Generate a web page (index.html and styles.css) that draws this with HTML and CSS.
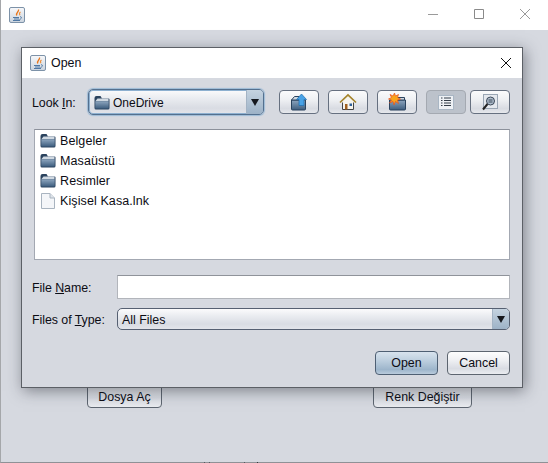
FILE: index.html
```html
<!DOCTYPE html>
<html lang="tr">
<head>
<meta charset="utf-8">
<title>Open</title>
<link rel="stylesheet" href="styles.css">
</head>
<body>
<svg class="defs" width="0" height="0" aria-hidden="true">
  <defs>
    <linearGradient id="fg" x1="0" y1="0" x2="0" y2="1"><stop offset="0" stop-color="#8ea6bf"/><stop offset="1" stop-color="#3d5d7e"/></linearGradient>
    <linearGradient id="jg" x1="0" y1="0" x2="0" y2="1"><stop offset="0" stop-color="#f7f8fa"/><stop offset="1" stop-color="#cbd4de"/></linearGradient>
    <symbol id="java" viewBox="0 0 16 16">
      <rect x=".5" y=".5" width="15" height="15" rx="1.5" fill="url(#jg)" stroke="#7d92a8"/>
      <path d="M9.500 2.500c.8 2.200-2.800 3-1.800 6" stroke="#e8761c" stroke-width="1.300" fill="none"/>
      <path d="M11.500 5c-1.500 1-1.300 2-.6 3.300" stroke="#ee8f3a" stroke-width="1.100" fill="none"/>
      <path d="M4 10.500h6M5 12h5M4 13.500h7" stroke="#4f78a4" fill="none"/>
      <path d="M11 9.800c2-.4 2 2-.5 2.700" stroke="#4f78a4" fill="none"/>
    </symbol>
    <symbol id="folder" viewBox="0 0 16 15">
      <path d="M.5 3V13q0 1.500 1.500 1.500h12q1.500 0 1.500-1.500V4.500q0-1-1-1H8L6.500 1H2.500Q.5 1 .5 3z" fill="#2b435e"/>
      <path d="M1.500 6 3.500 3.500H14.500V6z" fill="#cfd8e1"/>
      <path d="M1.300 6.200h13.400v7.400H1.300z" fill="url(#fg)"/>
    </symbol>
    <symbol id="doc" viewBox="0 0 14 16">
      <path d="M.5.500H9L13.500 5V15.500H.5z" fill="#f4f6f9" stroke="#a9b4c0"/>
      <path d="M9 .5V5H13.500" fill="#dfe4ea" stroke="#a9b4c0"/>
    </symbol>
  </defs>
</svg>

<div class="app">
  <header class="app-title">
    <svg class="ic16"><use href="#java"/></svg>
    <div class="win-controls">
      <svg class="wc" viewBox="0 0 46 30"><path d="M18 14.500H28" stroke="#9a9a9a" fill="none"/></svg>
      <svg class="wc" viewBox="0 0 46 30"><path d="M18.500 9.500h9v9h-9z" stroke="#8a8a8a" fill="none"/></svg>
      <svg class="wc" viewBox="0 0 46 30"><path d="M18 9l10 10M28 9 18 19" stroke="#9a9a9a" fill="none"/></svg>
    </div>
  </header>
  <main class="app-body">
    <button class="btn btn-main btn-dosya">Dosya Aç</button>
    <button class="btn btn-main btn-renk">Renk Değiştir</button>
  </main>
  <div class="clip-marks"></div>
</div>

<section class="dialog">
  <header class="dlg-title">
    <svg class="ic16"><use href="#java"/></svg>
    <span class="dlg-name">Open</span>
    <svg class="dlg-close" viewBox="0 0 12 12"><path d="M1 1l10 10M11 1 1 11" stroke="#111" fill="none"/></svg>
  </header>
  <div class="dlg-body">
    <div class="toolbar">
      <label class="lbl lbl-look">Look <u>I</u>n:</label>
      <div class="combo combo-look">
        <svg class="ic-folder"><use href="#folder"/></svg>
        <span class="combo-text">OneDrive</span>
        <span class="arrow"><i></i></span>
      </div>
      <div class="tools">
        <button class="tbtn">
          <svg width="18" height="18" viewBox="0 0 18 18">
            <path d="M1.500 7V16q0 1 1 1h12q1 0 1-1V7z" fill="url(#fg)" stroke="#2b435e"/>
            <path d="M1.500 7 4.500 3.500H9V7z" fill="#cfd8e1" stroke="#2b435e"/>
            <path d="M11.500 1 16.500 6.500H14v6H9V6.500H6.500z" fill="#48a2e6" stroke="#1e6fb0" stroke-width=".7"/>
          </svg>
        </button>
        <button class="tbtn">
          <svg width="18" height="18" viewBox="0 0 18 18">
            <path d="M3.500 8.500V16.500h11V8.500L9 3z" fill="#f6f4ec"/>
            <path d="M1 9.500 9 2l8 7.500" fill="none" stroke="#a5842a" stroke-width="1.700"/>
            <path d="M3.500 9.500V16.500h11V9.500" fill="none" stroke="#444"/>
            <path d="M6 11h2.500v5.500H6z" fill="#a0601e"/>
            <path d="M10.500 10.500h2.500v2.500h-2.500z" fill="#2f5f98"/>
          </svg>
        </button>
        <button class="tbtn">
          <svg width="18" height="18" viewBox="0 0 18 18">
            <path d="M1.500 7V16q0 1 1 1h14q1 0 1-1V7z" fill="url(#fg)" stroke="#2b435e"/>
            <path d="M9 7 10 4.500h6.500V7z" fill="#cfd8e1" stroke="#2b435e"/>
            <path d="M6.500 0 7.500 3 10.500 1.500 9.500 4.500 12.500 6 9.500 7 10.500 10.500 7.500 8.500 6 12 5 8.500 1.500 10 3.500 7 .5 6 3.500 4.500 2 1.500 5 3z" fill="#f9a41c" stroke="#e8501c" stroke-width=".7"/>
          </svg>
        </button>
        <button class="tbtn tbtn-on">
          <svg width="16" height="15" viewBox="0 0 16 15">
            <rect x=".5" y=".5" width="15" height="14" fill="#eef1f5" stroke="#a9b6c4"/>
            <path d="M3 3h1.500M6 3h7M3 5.500h1.500M6 5.500h7M3 8h1.500M6 8h7M3 10.500h1.500M6 10.500h7" stroke="#333c48" fill="none"/>
          </svg>
        </button>
        <button class="tbtn">
          <svg width="16" height="17" viewBox="0 0 16 17">
            <rect x="1.500" y=".5" width="14" height="14" fill="#e4e8ee" stroke="#9aa6b4"/>
            <circle cx="8.500" cy="7" r="4" fill="#aebccb" stroke="#3b4858"/>
            <path d="M6.500 6h4M6.500 8h4" stroke="#3b4858" fill="none"/>
            <path d="M5.500 10 1 15.500" stroke="#222" stroke-width="2" fill="none"/>
          </svg>
        </button>
      </div>
    </div>

    <ul class="files">
      <li><svg class="ic-folder"><use href="#folder"/></svg>Belgeler</li>
      <li><svg class="ic-folder"><use href="#folder"/></svg>Masaüstü</li>
      <li><svg class="ic-folder"><use href="#folder"/></svg>Resimler</li>
      <li><svg class="ic-doc"><use href="#doc"/></svg>Kişisel Kasa.lnk</li>
    </ul>

    <div class="row row-name">
      <label class="lbl lbl-field">File <u>N</u>ame:</label>
      <input class="name-input" type="text">
    </div>
    <div class="row row-type">
      <label class="lbl lbl-field">Files of <u>T</u>ype:</label>
      <div class="combo combo-type">
        <span class="combo-text">All Files</span>
        <span class="arrow"><i></i></span>
      </div>
    </div>
    <div class="actions">
      <button class="btn btn-dlg btn-open">Open</button>
      <button class="btn btn-dlg">Cancel</button>
    </div>
  </div>
</section>
</body>
</html>
```
FILE: styles.css
```css
* { box-sizing: border-box; }
html, body { margin: 0; padding: 0; }
body {
  position: relative;
  width: 548px;
  height: 463px;
  overflow: hidden;
  background: #d6d9e0;
  font: 12.4px "Liberation Sans", Arial, sans-serif;
  color: #0c0c14;
}
.defs { position: absolute; }
.ic16 { width: 16px; height: 16px; display: block; flex: none; }

/* Parent window */
.app {
  position: relative;
  width: 548px;
  height: 463px;
  display: flex;
  flex-direction: column;
  border-left: 1px solid #a5a7aa;
  border-bottom: 1px solid #8f9196;
}
.app-title {
  height: 30px;
  background: #fff;
  display: flex;
  align-items: center;
  padding: 0 0 0 8px;
  flex: none;
}
.win-controls { margin-left: auto; display: flex; }
.wc { width: 46px; height: 30px; display: block; }
.app-body {
  flex: 1;
  display: flex;
  justify-content: space-between;
  align-items: flex-end;
  padding: 0 76px 54px 86px;
}
.clip-marks {
  position: absolute;
  left: 203px;
  bottom: -1px;
  width: 55px;
  height: 1px;
  background:
    linear-gradient(#55585e, #55585e) 0 0 / 1px 1px no-repeat,
    linear-gradient(#55585e, #55585e) 5px 0 / 1px 1px no-repeat,
    linear-gradient(#55585e, #55585e) 40px 0 / 1px 1px no-repeat,
    linear-gradient(#33363b, #33363b) 53px 0 / 1px 1px no-repeat;
}

/* Buttons */
.btn {
  font: inherit;
  color: inherit;
  border: 1px solid #5d6570;
  border-radius: 4px;
  padding: 0;
  background: linear-gradient(#fdfdfe 0%, #f0f1f4 35%, #d9dce3 75%, #eaecf0 100%);
  height: 24px;
  display: block;
}
.btn-main {
  height: 40px;
  display: flex;
  align-items: flex-end;
  justify-content: center;
  padding-bottom: 3px;
}
.btn-dosya { width: 75px; }
.btn-renk { width: 99px; }

/* Dialog */
.dialog {
  position: absolute;
  left: 21px;
  top: 47px;
  width: 502px;
  height: 341px;
  border: 1px solid #5c6066;
  background: #d6d9e0;
  box-shadow: 2px 3px 14px rgba(40, 44, 54, .5);
  display: flex;
  flex-direction: column;
}
.dlg-title {
  height: 30px;
  flex: none;
  background: #fff;
  display: flex;
  align-items: center;
  padding: 0 0 0 8px;
}
.dlg-name { margin-left: 5px; }
.dlg-close { width: 12px; height: 12px; margin-left: auto; margin-right: 10px; margin-top: -1px; display: block; }
.dlg-body { padding: 11px 12px 0; display: flex; flex-direction: column; flex: 1; }

.toolbar { display: flex; align-items: center; height: 26px; }
.lbl { display: block; padding-top: 2px; }
.lbl-look { width: 56px; flex: none; margin-left: -2px; letter-spacing: -.05px; }
.lbl-field { width: 85px; flex: none; margin-left: -2px; letter-spacing: -.05px; }

.combo {
  display: flex;
  align-items: center;
  background: linear-gradient(#fbfbfc 0%, #eceef2 30%, #d9dce3 75%, #e3e5ea 100%);
  border: 1px solid #566072;
  border-radius: 5px;
}
.combo-look {
  width: 176px;
  height: 26px;
  padding-left: 5px;
  box-shadow: 0 0 0 1px #8db0d0 inset, 0 0 1px 1px #9dbbd6;
  border-color: #54708f;
}
.combo-text { padding-top: 2px; }
.combo-look .combo-text { margin-left: 3px; font-size: 12px; }
.ic-folder { width: 16px; height: 15px; display: block; flex: none; }
.ic-doc { width: 14px; height: 16px; display: block; flex: none; margin: 0 5px 0 1px; }
.arrow {
  margin-left: auto;
  width: 17px;
  align-self: stretch;
  background: linear-gradient(#c5d3e0, #9db2c7);
  border-left: 1px solid #a3b3c4;
  border-radius: 0 4px 4px 0;
  display: flex;
  align-items: center;
  justify-content: center;
}
.arrow i {
  width: 0;
  height: 0;
  border-left: 4px solid transparent;
  border-right: 4px solid transparent;
  border-top: 7px solid #15181e;
}

.tools { display: flex; margin-left: 15px; }
.tbtn {
  width: 40px;
  height: 24px;
  padding: 0;
  margin-right: 9px;
  border: 1px solid #667080;
  border-radius: 4px;
  background: linear-gradient(#fbfbfc 0%, #eef0f3 40%, #d8dbe2 80%, #e6e8ec 100%);
  display: flex;
  align-items: center;
  justify-content: center;
}
.tbtn svg { display: block; }
.tbtn-on {
  margin-right: 4px;
  background: #bcc2cb;
  border-color: #a4a9b1;
}
.tbtn:last-child { margin-right: 0; }

.files {
  list-style: none;
  margin: 14px 0 0;
  padding: 1px 0 0 5px;
  height: 131px;
  background: #fff;
  border: 1px solid #a3a8b2;
  border-top-color: #8c919b;
  font-size: 12.5px;
  letter-spacing: .1px;
}
.files li { height: 20px; display: flex; align-items: center; }
.files .ic-folder { margin-right: 4px; margin-top: -2px; }

.row { display: flex; align-items: center; }
.row-name { margin-top: 15px; }
.row-type { margin-top: 9px; }
.name-input {
  width: 393px;
  height: 24px;
  padding: 0 4px;
  background: #fff;
  border: 1px solid #b2b5bb;
  border-top-color: #8f939a;
  outline: none;
}
.combo-type { width: 393px; height: 22px; padding-left: 4px; }

.actions { display: flex; justify-content: flex-end; gap: 9px; margin-top: 21px; }
.btn-dlg { width: 63px; height: 24px; }
.btn-open {
  background: linear-gradient(#d8e3ee 0%, #bccede 40%, #9db5cb 80%, #b9cbdc 100%);
  border-color: #4e5f73;
}
```
